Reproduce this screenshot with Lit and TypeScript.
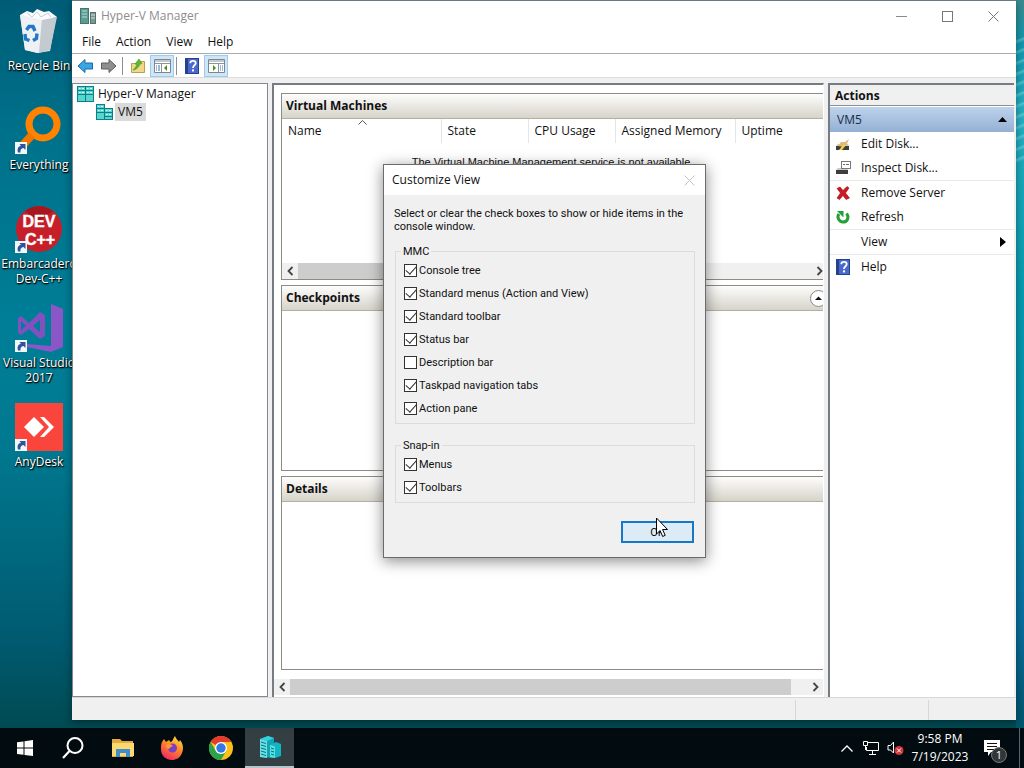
import { LitElement, html, css, svg, nothing } from "lit";
import { customElement, state } from "lit/decorators.js";

const bookIcon = html`<svg width="16" height="18" viewBox="0 0 16 18" aria-hidden="true">
  <rect x="1.500" y="1.500" width="13" height="15" fill="#4a69cc" stroke="#26418f"/>
  <rect x="1" y="1" width="3" height="16" fill="#26418f"/>
  <path d="M6.3 6.2C6.3 3.2 11.7 3.2 11.7 6.2C11.7 8.2 9 8.4 9 11" fill="none" stroke="#fff" stroke-width="1.800"/>
  <rect x="8" y="12.4" width="2" height="2" fill="#fff"/></svg>`;

const serverCell = (x: number, y: number, w: number, h: number) => svg`
  <rect x=${x} y=${y} width=${w} height=${h} fill="#56d6d0" stroke="#0e7f84"/>
  <path d="M${x} ${y + 4}H${x + w}M${x} ${y + 8}H${x + w}" stroke="#0e7f84"/>
  <path d="M${x + 1.5} ${y + 2}H${x + 3}M${x + 1.5} ${y + 6}H${x + 3}M${x + 4.5} ${y + 2}H${x + 6.5}M${x + 4.5} ${y + 6}H${x + 6.5}" stroke="#e9ffff"/>`;

const shortcut = svg`<rect x="0" y="36" width="12" height="12" fill="#f4f6f8"/>
  <path d="M3 46.500C1.800 42.500 3.500 40 6 40L4.500 38H10.500V44L8.500 42C6 42.500 5 44 5.500 46.500Z" fill="#2a559c"/>`;

const icons = {
  bin: html`<svg width="48" height="48" viewBox="0 0 48 48" aria-hidden="true">
    <path d="M5 8L41 11L35 44L22 46L10 43Z" fill="#dfe4e8"/>
    <path d="M5 8L27 12L24 46L10 43Z" fill="#eef1f3"/>
    <path d="M27 12L42 10L35 43L24 46Z" fill="#c3cad0"/>
    <path d="M5 8L12 4L18 6L22 2L29 5L34 4L42 10L27 13Z" fill="#fafbfc"/>
    <path d="M12 6L17 10L22 5L26 10L33 6L36 10" fill="none" stroke="#c8ced4"/>
    <path d="M11.500 23L14 19.500H18L20 24M22 26.500L21.500 31.500L18 33.500M14.500 33.500L10.500 32L10 27" fill="none" stroke="#2377c6" stroke-width="3.400"/></svg>`,
  everything: html`<svg width="48" height="48" viewBox="0 0 48 48" aria-hidden="true">
    <circle cx="28" cy="18" r="14" fill="none" stroke="#ff8300" stroke-width="7"/>
    <path d="M17 29L7 40" stroke="#f07600" stroke-width="8"/>${shortcut}</svg>`,
  dev: html`<svg width="48" height="48" viewBox="0 0 48 48" aria-hidden="true">
    <circle cx="24" cy="24" r="23" fill="#c71f2a"/><path d="M10 6A23 23 0 0 1 38 6L24 16Z" fill="#a5161f"/>
    <g font-family="Liberation Sans, sans-serif" font-size="16" font-weight="700" fill="#fff" stroke="#fff" stroke-width=".4" text-anchor="middle">
      <text x="24" y="22">DEV</text><text x="25" y="40">C++</text></g>${shortcut}</svg>`,
  vs: html`<svg width="48" height="48" viewBox="0 0 48 48" aria-hidden="true">
    <path d="M36 0L48 5V43L36 48L12 43V40L36 42Z" fill="#8b56c8"/>
    <path d="M3 14L6 12L14 19L25 8L30 11V32L25 35L14 25L6 31L3 29ZM6 17V26L11 22ZM25 16L18 22L25 28Z" fill="#8350c0" fill-rule="evenodd"/>${shortcut}</svg>`,
  anydesk: html`<svg width="48" height="48" viewBox="0 0 48 48" aria-hidden="true">
    <rect width="48" height="48" fill="#f9453b"/>
    <path d="M19 14L29 24L19 34L9 24Z" fill="#fff"/><path d="M25 14H29L39 24L29 34H25L34 24Z" fill="#fff"/>${shortcut}</svg>`,
};

const toolIcons = {
  back: html`<svg width="17" height="16" viewBox="0 0 17 16" aria-hidden="true"><path d="M1 8L8 1.500V5H15.500V11H8V14.500Z" fill="#39a5e4" stroke="#1a6aa6"/></svg>`,
  forward: html`<svg width="17" height="16" viewBox="0 0 17 16" aria-hidden="true"><path d="M16 8L9 1.500V5H1.500V11H9V14.500Z" fill="#8f8f8f" stroke="#5c5c5c"/></svg>`,
  up: html`<svg width="16" height="16" viewBox="0 0 16 16" aria-hidden="true"><path d="M1.500 5.500H6L8 3.500H14.500V14.500H1.500Z" fill="#efd987" stroke="#b99d50"/>
    <path d="M3 12C4 11 6 9 7 6.500L5 6L9 1L12 5.500L10 6C9 9 6 12 3 12Z" fill="#5cb832" stroke="#3c8a1e" stroke-width=".5"/></svg>`,
  tree: html`<svg width="17" height="16" viewBox="0 0 17 16" aria-hidden="true"><path d="M.5 1.500H16.500V14.500H.5Z" fill="#fff" stroke="#7d858d"/><path d="M1 3H16M1 5.500H16M7.500 5V14" stroke="#8b939b"/>
    <path d="M2 8H3M4 8H6M2 10H3M4 10H6M2 12H3M4 12H6" stroke="#3a73b5"/><path d="M13 7V13L10 10Z" fill="#4b8f1f"/></svg>`,
  pane: html`<svg width="17" height="16" viewBox="0 0 17 16" aria-hidden="true"><path d="M.5 1.500H16.500V14.500H.5Z" fill="#fff" stroke="#7d858d"/><path d="M1 3H16M1 5.500H16M10.500 5V14" stroke="#8b939b"/>
    <path d="M12 8H13M14 8H15M12 10H13M14 10H15M12 12H13M14 12H15" stroke="#3a73b5"/><path d="M5 7V13L8 10Z" fill="#4b8f1f"/></svg>`,
};

const actionIcons = {
  edit: html`<svg width="16" height="16" viewBox="0 0 16 16" aria-hidden="true"><path d="M1 10L3 8H13L14 10Z" fill="#c9c9c4"/><rect x="1" y="10" width="13" height="4" fill="#3c3f3c"/>
    <path d="M3 10L6 6H10L14 3L12 8L9 11Z" fill="#e3b77a"/><path d="M4 14L8 9H11L7 14Z" fill="#f1d43e"/></svg>`,
  inspect: html`<svg width="16" height="16" viewBox="0 0 16 16" aria-hidden="true"><path d="M1 10L3 8H12L13 10Z" fill="#c6cac6"/><rect x="1" y="10" width="12" height="4" fill="#3c3f3c"/>
    <rect x="6.500" y="1.500" width="9" height="7" fill="#fff" stroke="#777"/><path d="M8 4.500H10M11 4.500H14" stroke="#666"/></svg>`,
  remove: html`<svg width="16" height="16" viewBox="0 0 16 16" aria-hidden="true"><path d="M2 3.500L5 2L8 5.500L12 1.500L14 3L10.500 8L14.500 13L11 14.500L8 10.500L4.500 14.500L2 13L5.500 8Z" fill="#cf1722" stroke="#9c0d17" stroke-width=".6"/></svg>`,
  refresh: html`<svg width="16" height="16" viewBox="0 0 16 16" aria-hidden="true"><path d="M4 5C1.500 8 4 13 8 13C12.500 13 14.500 8 11.500 4.500" fill="none" stroke="#24a136" stroke-width="3"/><path d="M2 2H8.500V8.500Z" fill="#24a136"/></svg>`,
  help: bookIcon,
};

@customElement("app-root")
export class AppRoot extends LitElement {
  @state() private mmc = [
    { label: "Console tree", on: true },
    { label: "Standard menus (Action and View)", on: true },
    { label: "Standard toolbar", on: true },
    { label: "Status bar", on: true },
    { label: "Description bar", on: false },
    { label: "Taskpad navigation tabs", on: true },
    { label: "Action pane", on: true },
  ];
  @state() private snapin = [
    { label: "Menus", on: true },
    { label: "Toolbars", on: true },
  ];

  static styles = css`
    :host { display: flex; flex-direction: column; height: 100vh; overflow: hidden; font: 12px/16px "Open Sans", "Noto Sans", sans-serif; color: #111; cursor: default; }
    * { box-sizing: border-box; }
    svg { display: block; flex: none; text-shadow: none; }
    button { font: inherit; color: inherit; border: 0; background: none; padding: 0; margin: 0; }
    a { color: inherit; text-decoration: none; }
    h1, h2, p { margin: 0; font: inherit; }

    .desktop { flex: 1; min-height: 0; position: relative;
      background:
        repeating-linear-gradient(158deg, transparent 0 5px, #ffffff44 7px, transparent 10px) 100% 34px / 8px 130px no-repeat,
        linear-gradient(180deg, #3c8a90 0, #0f98ae 6%, #22b0c0 16%, #069bb0 40%, #0590ac 60%, #0a6f9e 85%, #00566c 100%) 100% 0 / 8px 100% no-repeat,
        linear-gradient(180deg, #005c76 0, #00718b 18%, #007e97 45%, #007a91 60%, #005a70 88%, #004a52 100%); }
    .shortcuts { width: 78px; display: flex; flex-direction: column; padding-top: 7px; }
    .shortcut { display: flex; flex-direction: column; align-items: center; gap: 3px; min-height: 99px; color: #fff; text-align: center; line-height: 15px; text-shadow: 1px 1px 1px #000, 0 1px 2px #000; }
    .window { position: absolute; inset: 0 8px 8px 72px; display: flex; flex-direction: column; background: #f0f0f0; border-top: 1px solid #5f7d82; box-shadow: 0 2px 8px #0006; }
    .titlebar { display: flex; align-items: center; background: #fff; height: 30px; padding-left: 7px; gap: 5px; color: #8d8d8d; flex: none; }
    .title { flex: 1; }
    .caption { display: flex; }
    .caption button { width: 46px; display: grid; place-items: center; }
    .menubar { display: flex; background: #fff; height: 22px; align-items: center; padding-left: 10px; gap: 15px; flex: none; }
    .toolbar { display: flex; align-items: center; background: #fff; height: 25px; border-top: 1px solid #a9adb2; border-bottom: 1px solid #dcdcdc; padding-left: 2px; flex: none; }
    .toolbar button { width: 23px; height: 22px; display: grid; place-items: center; }
    .toolbar .wide { width: 24px; }
    .toolbar .active { background: #cfe6f8; border: 1px solid #9ccbf0; }
    .sep { width: 1px; height: 18px; background: #8e8e8e; margin: 0 3px 0 2px; }

    .body { flex: 1; min-height: 0; display: grid; grid-template-columns: 196px 1fr 186px; gap: 4px; padding: 5px 2px 0 0; }
    .tree { background: #fff; border: 1px solid #828790; padding: 1px 4px; }
    .node { display: flex; align-items: center; gap: 4px; height: 18px; }
    .child { padding-left: 19px; }
    .child span { background: #dadada; padding: 1px 3px; margin-left: -2px; }
    .center { background: #fff; border-top: 2px solid #777b82; border-left: 2px solid #777b82; border-right: 1px solid #fff; min-width: 0; display: flex; flex-direction: column; overflow: hidden; padding-bottom: 2px; }
    .panels { flex: 1; min-height: 0; display: grid; grid-template-rows: 187px 186px 1fr; gap: 5px; padding: 8px 0 9px 7px; }
    .panel { border: 1px solid #8c8c84; border-right: 0; display: flex; flex-direction: column; min-width: 0; min-height: 0; overflow: hidden; }
    .panel-head { display: flex; justify-content: space-between; align-items: center; height: 25px; flex: none; padding-left: 4px; font-weight: 700; background: linear-gradient(180deg, #fdfdfc, #d6d3c9); border-bottom: 1px solid #b3b0a3; }
    .grid { border-collapse: collapse; table-layout: fixed; width: 100%; }
    .grid th { font-weight: 400; text-align: left; height: 24px; padding: 0 6px; border-right: 1px solid #e5e5e5; }
    .grid th:last-child { border-right: 0; }
    .grid td { text-align: center; height: 38px; padding: 0; font: 11px/14px "Liberation Sans", sans-serif; }
    .name { width: 159px; } .state { width: 87px; } .cpu { width: 87px; } .mem { width: 120px; }
    .sortable { position: relative; }
    .sort { position: absolute; left: 76px; top: 1px; }
    .hscroll { display: flex; align-items: center; height: 16px; background: #f0f0f0; flex: none; }
    .hscroll button { width: 16px; height: 16px; display: grid; place-items: center; flex: none; }
    .thumb { background: #cdcdcd; height: 16px; flex: 1; }
    .inner { margin-top: auto; }
    .inner .thumb { flex: 0 0 60%; }
    .inner .end { margin-left: auto; width: 8px; justify-content: end; }
    .outer .thumb { margin-right: 16px; }
    .collapse { margin-right: -4px; }

    .actions { background: #fff; border-top: 2px solid #777b82; border-left: 2px solid #777b82; min-width: 0; }
    .actions-title { background: #f0f0f0; font-weight: 700; height: 21px; padding: 3px 5px 0; border-bottom: 1px solid #8e8e8e; }
    .group { display: flex; width: 100%; justify-content: space-between; align-items: center; height: 25px; margin-top: 1px; padding: 0 7px; background: linear-gradient(180deg, #bdd3ec, #93b0d4); color: #1b2a45; }
    .action { display: grid; grid-template-columns: 16px 1fr auto; align-items: center; gap: 10px; height: 24px; padding: 0 8px 0 5px; }
    .ruled { border-top: 1px solid #e9e9e9; height: 25px; }
    .statusbar { display: grid; grid-template-columns: 1fr 133px 88px; height: 23px; flex: none; border-top: 1px solid #d7d7d7; padding-top: 2px; }
    .statusbar span { border-left: 1px solid #d7d7d7; }
    .statusbar span:first-child { border-left: 0; }

    .dialog { position: absolute; left: 383px; top: 164px; width: 323px; background: #f0f0f0; border: 1px solid #6b6b6b; box-shadow: 0 3px 14px #0007; font: 11px/13px Roboto, sans-serif; padding-bottom: 14px; }
    .dialog-title { display: flex; justify-content: space-between; align-items: center; height: 30px; background: #fff; padding: 0 10px 0 8px; font: 12px/16px "Open Sans", sans-serif; }
    .dialog-body { padding: 12px 10px 0; }
    fieldset { border: 1px solid #dcdcdc; margin: 0; padding: 2px 7px 3px 8px; min-width: 0; }
    .mmc { margin: 12px 0 0 1px; }
    .snap { margin: 15px 0 0 1px; }
    legend { padding: 0 2px; margin-left: -3px; height: 12px; line-height: 13px; }
    .check { display: flex; align-items: center; gap: 2px; height: 23px; }
    .check input { appearance: none; width: 13px; height: 13px; margin: 0; border: 1px solid #333; background: #fff; display: grid; place-items: center; }
    .check input:checked::after { content: ""; width: 9px; height: 5px; margin-top: -3px; border: solid #333; border-width: 0 0 1px 1px; transform: rotate(-48deg); }
    .buttons { display: flex; justify-content: flex-end; padding: 18px 1px 0 0; }
    .ok { width: 73px; height: 22px; border: 2px solid #1678c8; background: #dcebf6; }
    .cursor { position: absolute; left: 655px; top: 517px; }

    .taskbar { height: 40px; flex: none; display: flex; background: #020b0f; color: #fff; }
    .taskbar button { width: 49px; display: grid; place-items: center; }
    .taskbar .running { background: #343f43; border-bottom: 2px solid #b9c4c8; }
    .tray { margin-left: auto; display: flex; align-items: center; }
    .tray button { height: 40px; width: 24px; }
    .tray .clock { width: 66px; text-align: center; line-height: 18px; display: block; }
    .tray .notify { width: 46px; position: relative; padding-right: 8px; }
    .badge { position: absolute; left: 18px; top: 19px; width: 16px; height: 16px; border-radius: 50%; background: #30363a; border: 1px solid #777; font-size: 11px; line-height: 14px; text-align: center; }
    .peek { width: 5px; height: 40px; border-left: 1px solid #59646a; }
  `;

  private toggle(list: "mmc" | "snapin", i: number) {
    this[list] = this[list].map((c, n) => (n === i ? { ...c, on: !c.on } : c));
  }

  private checks(list: "mmc" | "snapin") {
    return this[list].map((c, i) => html`<label class="check"><input type="checkbox" .checked=${c.on} @change=${() => this.toggle(list, i)}>${c.label}</label>`);
  }

  private shortcut(icon: unknown, label: unknown) {
    return html`<a class="shortcut" href="#">${icon}<span>${label}</span></a>`;
  }

  private chevron(dir: "left" | "right") {
    return html`<svg width="7" height="10" viewBox="0 0 7 10" aria-hidden="true"><path d=${dir === "left" ? "M5.500 1L1.500 5L5.500 9" : "M1.500 1L5.500 5L1.500 9"} fill="none" stroke="#444" stroke-width="1.800"/></svg>`;
  }

  private action(icon: unknown, label: string, ruled = false, more = false) {
    return html`<a class="action ${ruled ? "ruled" : ""}" href="#"><span>${icon}</span><span>${label}</span>
      ${more ? html`<svg width="6" height="10" viewBox="0 0 6 10"><path d="M0 0L6 5L0 10Z" fill="#000"/></svg>` : nothing}</a>`;
  }

  render() {
    return html`
      <main class="desktop">
        <nav class="shortcuts">
          ${this.shortcut(icons.bin, "Recycle Bin")}
          ${this.shortcut(icons.everything, "Everything")}
          ${this.shortcut(icons.dev, html`Embarcadero<br>Dev-C++`)}
          ${this.shortcut(icons.vs, html`Visual Studio<br>2017`)}
          ${this.shortcut(icons.anydesk, "AnyDesk")}
        </nav>
        <section class="window">
          <header class="titlebar">
            <svg width="17" height="16" viewBox="0 0 17 16" aria-hidden="true"><rect x="1.500" y=".5" width="8" height="15" fill="#5b9c92" stroke="#44756f"/><path d="M3 3H8M3 6H8M3 9H8" stroke="#b8dcd6"/><rect x="11.500" y="4.500" width="5" height="11" fill="#789790" stroke="#5c706c"/><path d="M12 7H16M12 10H16" stroke="#d2e0dd"/></svg>
            <h1 class="title">Hyper-V Manager</h1>
            <div class="caption">
              <button aria-label="Minimize"><svg width="11" height="11"><path d="M0 5.500H11" stroke="#8a8a8a"/></svg></button>
              <button aria-label="Maximize"><svg width="11" height="11"><rect x=".5" y=".5" width="10" height="10" fill="none" stroke="#777"/></svg></button>
              <button aria-label="Close"><svg width="11" height="11"><path d="M.5 .5L10.500 10.500M10.500 .5L.5 10.500" stroke="#777"/></svg></button>
            </div>
          </header>
          <nav class="menubar">${["File", "Action", "View", "Help"].map((m) => html`<button>${m}</button>`)}</nav>
          <div class="toolbar">
            <button aria-label="Back">${toolIcons.back}</button>
            <button aria-label="Forward">${toolIcons.forward}</button>
            <span class="sep"></span>
            <button class="wide" aria-label="Up one level">${toolIcons.up}</button>
            <button class="wide active" aria-label="Console tree">${toolIcons.tree}</button>
            <span class="sep"></span>
            <button class="wide" aria-label="Help">${bookIcon}</button>
            <button class="wide active" aria-label="Action pane">${toolIcons.pane}</button>
          </div>
          <div class="body">
            <div class="tree">
              <div class="node"><svg width="17" height="16" viewBox="0 0 17 16">${serverCell(0.5, 0.5, 8, 15)}${serverCell(8.5, 0.5, 8, 15)}</svg><span>Hyper-V Manager</span></div>
              <div class="node child"><svg width="17" height="16" viewBox="0 0 17 16">${serverCell(0.5, 0.5, 8, 15)}${serverCell(8.5, 4.5, 8, 11)}</svg><span>VM5</span></div>
            </div>
            <div class="center">
              <div class="panels">
                <section class="panel">
                  <h2 class="panel-head">Virtual Machines</h2>
                  <table class="grid">
                    <thead><tr>
                      <th class="name sortable">Name<svg class="sort" width="9" height="5"><path d="M.5 4.500L4.500 .5L8.500 4.500" fill="none" stroke="#555"/></svg></th>
                      <th class="state">State</th><th class="cpu">CPU Usage</th><th class="mem">Assigned Memory</th><th>Uptime</th>
                    </tr></thead>
                    <tbody><tr><td colspan="5">The Virtual Machine Management service is not available.</td></tr></tbody>
                  </table>
                  <div class="hscroll inner"><button aria-label="Scroll left">${this.chevron("left")}</button><div class="thumb"></div><button class="end" aria-label="Scroll right">${this.chevron("right")}</button></div>
                </section>
                <section class="panel">
                  <h2 class="panel-head">Checkpoints
                    <button class="collapse" aria-label="Collapse"><svg width="17" height="17" viewBox="0 0 17 17"><circle cx="8.500" cy="8.500" r="8" fill="#fff" stroke="#888"/><path d="M5 10L8.500 6.500L12 10Z" fill="#111"/></svg></button></h2>
                </section>
                <section class="panel"><h2 class="panel-head">Details</h2></section>
              </div>
              <div class="hscroll outer"><button aria-label="Scroll left">${this.chevron("left")}</button><div class="thumb"></div><button aria-label="Scroll right">${this.chevron("right")}</button></div>
            </div>
            <aside class="actions">
              <h2 class="actions-title">Actions</h2>
              <button class="group">VM5<svg width="9" height="5"><path d="M0 5L4.500 0L9 5Z" fill="#000"/></svg></button>
              ${this.action(actionIcons.edit, "Edit Disk...")}
              ${this.action(actionIcons.inspect, "Inspect Disk...")}
              ${this.action(actionIcons.remove, "Remove Server", true)}
              ${this.action(actionIcons.refresh, "Refresh")}
              ${this.action(nothing, "View", true, true)}
              ${this.action(actionIcons.help, "Help", true)}
            </aside>
          </div>
          <footer class="statusbar"><span></span><span></span><span></span></footer>
        </section>

        <section class="dialog" role="dialog" aria-label="Customize View">
          <header class="dialog-title"><h2>Customize View</h2><button aria-label="Close"><svg width="11" height="11"><path d="M.5 .5L10.500 10.500M10.500 .5L.5 10.500" stroke="#c4c4c4"/></svg></button></header>
          <div class="dialog-body">
            <p>Select or clear the check boxes to show or hide items in the console window.</p>
            <fieldset class="mmc"><legend>MMC</legend>${this.checks("mmc")}</fieldset>
            <fieldset class="snap"><legend>Snap-in</legend>${this.checks("snapin")}</fieldset>
            <div class="buttons"><button class="ok">OK</button></div>
          </div>
        </section>
        <svg class="cursor" width="13" height="21" viewBox="0 0 13 21" aria-hidden="true"><path d="M1.500 1V17L5 13.500L7.700 19.500L10.200 18.300L7.600 12.500H12.500Z" fill="#fff" stroke="#000"/></svg>
      </main>

      <footer class="taskbar">
        <button aria-label="Start"><svg width="16" height="16" viewBox="0 0 16 16"><path d="M0 2.300L6.500 1.400V7.600H0ZM7.500 1.200L16 0V7.600H7.500ZM0 8.600H6.500V14.800L0 13.900ZM7.500 8.600H16V16L7.500 14.900Z" fill="#fff"/></svg></button>
        <button aria-label="Search"><svg width="24" height="22" viewBox="0 0 24 22"><circle cx="13" cy="8.500" r="7.500" fill="none" stroke="#fff" stroke-width="2"/><path d="M7.500 14L1 21" stroke="#fff" stroke-width="2.200"/></svg></button>
        <button aria-label="File Explorer"><svg width="22" height="18" viewBox="0 0 22 18"><path d="M0 0H8L10 2H21V18H0Z" fill="#e2ab3e"/><path d="M0 4H22V17H0Z" fill="#fbd970"/><path d="M4 10H18V18H14V14H8V18H4Z" fill="#3f8ecb"/></svg></button>
        <button aria-label="Firefox"><svg width="24" height="24" viewBox="0 0 24 24"><defs><linearGradient id="fx" x1=".8" y1="0" x2=".3" y2="1"><stop offset="0" stop-color="#ffe14a"/><stop offset=".45" stop-color="#ff8a23"/><stop offset="1" stop-color="#f02667"/></linearGradient></defs>
          <path d="M2 6L4 3L6 6L9 4C10 5 10 6 11 6C13 5 13 2 15 0C16 3 18 4 19 6L20 4C23 8 24 12 22 17C20 22 16 24 12 24C6 24 1 20 1 13C1 10 1 8 2 6Z" fill="url(#fx)"/><circle cx="12.500" cy="12" r="4.500" fill="#7b3fc4"/><path d="M6 9C9 7 11 8 13 10C11 11 10 11 9 13C8 13 6 12 6 9Z" fill="#ff9a2b"/></svg></button>
        <button aria-label="Chrome"><svg width="24" height="24" viewBox="0 0 24 24"><circle cx="12" cy="12" r="12" fill="#fbc116"/><path d="M1.600 6A12 12 0 0 1 22.400 6H12L6.800 9Z" fill="#e33b2e"/><path d="M1.600 6L6.800 15L12 18L17.200 15L12 24A12 12 0 0 1 1.600 6Z" fill="#2ba24c"/><circle cx="12" cy="12" r="6" fill="#fff"/><circle cx="12" cy="12" r="4.700" fill="#3478e5"/></svg></button>
        <button class="running" aria-label="Hyper-V Manager"><svg width="24" height="24" viewBox="0 0 24 24"><path d="M2 4L10 1L16 3V23L2 22Z" fill="#12a5b2"/><path d="M2 4L9 6V23L2 22Z" fill="#6ce0e6"/><path d="M3 7L8 8.500M3 10L8 11.500M3 13L8 14.500M3 16L8 17.500M3 19L8 20.500" stroke="#08727c"/><path d="M2 4L10 1L16 3L9 6Z" fill="#33d3dc"/><path d="M12 10L18 7L23 9V21L17 23L12 22Z" fill="#12b5c2"/><path d="M12 10L17 11.500V23L12 22Z" fill="#5adde4"/><path d="M13 13L16 14M13 16L16 17M13 19L16 20" stroke="#08727c"/></svg></button>
        <div class="tray">
          <button aria-label="Show hidden icons"><svg width="12" height="7" viewBox="0 0 12 7"><path d="M.5 6.500L6 1L11.500 6.500" fill="none" stroke="#fff" stroke-width="1.300"/></svg></button>
          <button aria-label="Network"><svg width="16" height="14" viewBox="0 0 16 14"><path d="M5 1.500H15.500V9.500H3.500V6M9.500 10V13M6 13.500H13" fill="none" stroke="#fff"/><path d="M.5 .5H4.500V4.500H.5ZM2.500 5V9" fill="none" stroke="#fff"/></svg></button>
          <button aria-label="Volume muted"><svg width="17" height="15" viewBox="0 0 17 15"><path d="M1 4.500H3.500L6.500 1V12L3.500 9H1Z" fill="none" stroke="#fff"/><circle cx="12" cy="9.500" r="4.500" fill="#d2343c"/><path d="M10 7.500L14 11.500M14 7.500L10 11.500" stroke="#fff"/></svg></button>
          <button class="clock">9:58 PM<br>7/19/2023</button>
          <button class="notify" aria-label="Notifications"><svg width="16" height="16" viewBox="0 0 16 16"><path d="M0 0H16V12H7L4 16V12H0Z" fill="#fff"/><path d="M3 3.500H13M3 6.500H13M3 9.500H10" stroke="#111"/></svg><span class="badge">1</span></button>
          <span class="peek"></span>
        </div>
      </footer>`;
  }
}
